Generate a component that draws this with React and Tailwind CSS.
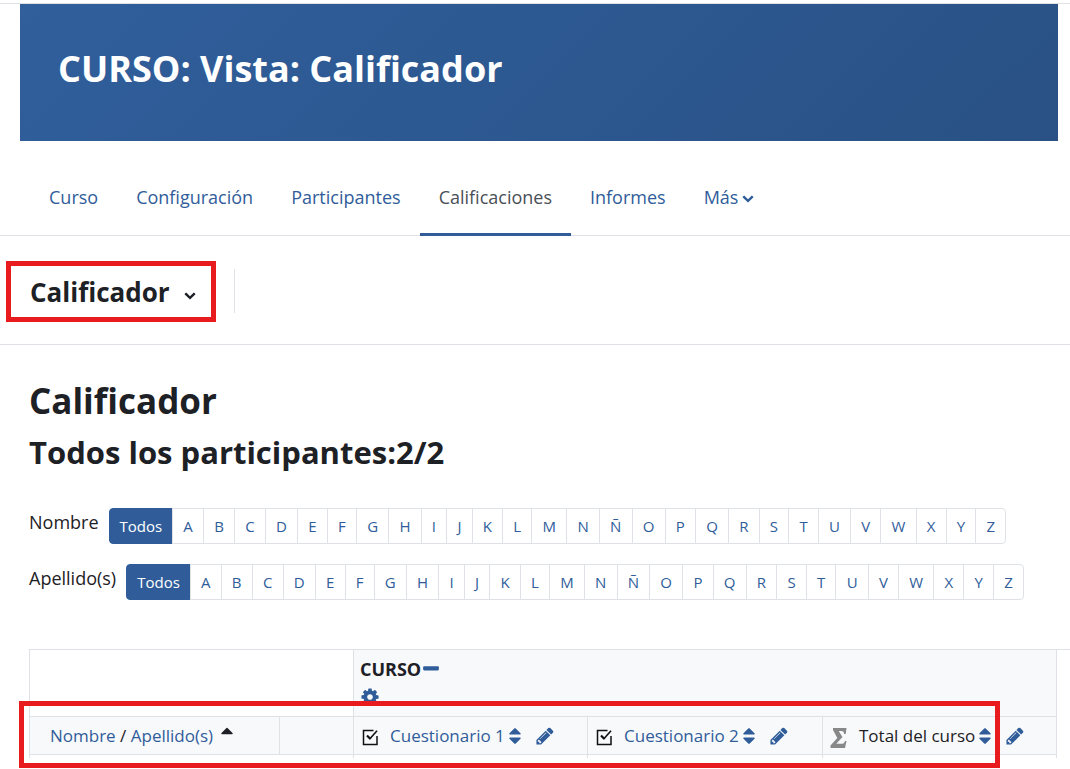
import { useState } from 'react';

const LETTERS = 'ABCDEFGHIJKLMNÑOPQRSTUVWXYZ'.split('');

const TABS = ['Curso', 'Configuración', 'Participantes', 'Calificaciones', 'Informes'];

const ICONS = {
  sort: 'M1408 1088q0 26-19 45l-448 448q-19 19-45 19t-45-19l-448-448q-19-19-19-45t19-45 45-19h896q26 0 45 19t19 45zm0-384q0 26-19 45t-45 19h-896q-26 0-45-19t-19-45 19-45l448-448q19-19 45-19t45 19l448 448q19 19 19 45z',
  pencil:
    'M491 1536l91-91-235-235-91 91v107h128v128h107zm523-928q0-22-22-22-10 0-17 7l-542 542q-7 7-7 17 0 22 22 22 10 0 17-7l542-542q7-7 7-17zm-54-192l416 416-832 832h-416v-416zm683 96q0 53-37 90l-166 166-416-416 166-165q36-38 90-38 53 0 91 38l235 234q37 39 37 91z',
  cog: 'M1152 896q0-106-75-181t-181-75-181 75-75 181 75 181 181 75 181-75 75-181zm512-109v222q0 12-8 23t-20 13l-185 28q-19 54-39 91 35 50 107 138 10 12 10 25t-9 23q-27 37-99 108t-94 71q-12 0-26-9l-138-108q-44 23-91 38-16 136-29 186-7 28-36 28h-222q-14 0-24.5-8.5t-11.5-21.5l-28-184q-49-16-90-37l-141 107q-10 9-25 9-14 0-25-11-126-114-165-168-7-10-7-23 0-12 8-23 15-21 51-66.5t54-70.5q-27-50-41-99l-183-27q-13-2-21-12.5t-8-23.5v-222q0-12 8-23t19-13l186-28q14-46 39-92-40-57-107-138-10-12-10-24 0-10 9-23 26-36 98.5-107.5t94.5-71.5q13 0 26 10l138 107q44-23 91-38 16-136 29-186 7-28 36-28h222q14 0 24.5 8.5t11.5 21.5l28 184q49 16 90 37l142-107q9-9 24-9 13 0 25 10 129 119 165 170 7 8 7 22 0 12-8 23-15 21-51 66.5t-54 70.5q26 50 41 98l183 28q13 2 21 12.5t8 23.5z',
  minus: 'M1600 736v192q0 40-28 68t-68 28h-1216q-40 0-68-28t-28-68v-192q0-40 28-68t68-28h1216q40 0 68 28t28 68z',
  caretUp: 'M1408 1216q0 26-19 45t-45 19h-896q-26 0-45-19t-19-45 19-45l448-448q19-19 45-19t45 19l448 448q19 19 19 45z',
  chevron:
    'M1683 808l-742 741q-19 19-45 19t-45-19l-742-741q-19-19-19-45.5t19-45.5l166-165q19-19 45-19t45 19l531 531 531-531q19-19 45-19t45 19l166 165q19 19 19 45.5t-19 45.5z',
};

function Icon({ name, className = 'size-5' }) {
  return (
    <svg className={`shrink-0 ${className}`} viewBox="0 0 1792 1792" fill="currentColor" aria-hidden="true">
      <path d={ICONS[name]} />
    </svg>
  );
}

function QuizIcon() {
  return (
    <svg className="size-5 shrink-0 text-[#111]" viewBox="0 0 20 20" fill="none" stroke="currentColor" aria-hidden="true">
      <path d="M13.500 4.500H3.500v14h13.500V10" strokeWidth="1.5" />
      <path d="M7 9.500l3.500 3.500" strokeWidth="2.2" />
      <path d="M9.700 13L17 4.700" strokeWidth="1.6" />
    </svg>
  );
}

function SigmaIcon() {
  return (
    <svg className="mt-1 size-5 shrink-0 text-[#888]" viewBox="0 0 20 20" fill="currentColor" aria-hidden="true">
      <path d="M4 0h13.500l-.8 6h-1.700c0-2.400-.9-3-3-3H9.700l3.800 6-6.200 6.800h5c2.200 0 3-.8 3.800-2.800h1.400L16 20H1.500v-2.500l6.800-7.500L4 2z" />
    </svg>
  );
}

function InitialsBar({ label }) {
  const [selected, setSelected] = useState('Todos');

  return (
    <div className="flex items-start gap-[10px]">
      <span className="text-[18px] leading-7">{label}</span>
      <nav aria-label={label} className="flex w-full max-w-[898px]">
        {['Todos', ...LETTERS].map((item) => (
          <button
            key={item}
            type="button"
            onClick={() => setSelected(item)}
            className={`-ml-px h-9 grow border px-[10px] text-[15px] first:ml-0 first:grow-0 first:rounded-l last:rounded-r ${
              selected === item ? 'border-[#305d9a] bg-[#305d9a] text-white' : 'border-[#dee2e6] text-[#305d9a]'
            }`}
          >
            {item}
          </button>
        ))}
      </nav>
    </div>
  );
}

function ItemHeader({ icon, title, link = true }) {
  return (
    <th scope="col" className="border border-[#dee2e6] bg-[#f8f9fb] py-0 pr-0 pl-[6px] font-normal">
      <div className="flex h-[37px] items-center">
        {icon}
        {link ? (
          <a href="#item" className="ml-[10px] text-[#305d9a]">{title}</a>
        ) : (
          <span className="ml-[10px]">{title}</span>
        )}
        <button type="button" aria-label={`Ordenar por ${title}`} className="text-[#305d9a]">
          <Icon name="sort" />
        </button>
        <button type="button" aria-label={`Editar ${title}`} className="ml-[10px] text-[#305d9a]">
          <Icon name="pencil" />
        </button>
      </div>
    </th>
  );
}

export default function App() {
  return (
    <div className="overflow-x-hidden bg-white pb-[11px] font-['Open_Sans',sans-serif] text-[#1d2125]">
      <div className="h-1 border-b border-[#dee2e6]" />
      <header className="mr-3 ml-5 h-[137px] bg-linear-135 from-[#305f9c] to-[#295185] px-[38px] pt-10">
        <h1 className="text-[36px] leading-[50px] font-bold text-white">CURSO: Vista: Calificador</h1>
      </header>

      <nav className="mt-[19px] flex border-b border-[#dee2e6] pl-[30px] text-[18px]">
        {TABS.map((tab) => (
          <a
            key={tab}
            href="#tab"
            className={`-mb-px flex h-[76px] items-center border-b-3 px-[19px] pt-[2px] ${
              tab === 'Calificaciones' ? 'border-b-[#305d9a] text-[#495057]' : 'border-b-transparent text-[#305d9a]'
            }`}
          >
            {tab}
          </a>
        ))}
        <button type="button" className="flex h-[75px] items-center gap-1 px-[19px] text-[#305d9a]">
          Más
          <Icon name="chevron" className="size-3" />
        </button>
      </nav>

      <div className="flex h-[109px] items-center border-b border-[#dee2e6] pt-[2px] pl-[6px]">
        <button
          type="button"
          className="flex h-[61px] w-[210px] items-center gap-[14px] border-5 border-[#e81b1e] pt-[2px] pl-[19px] text-[26px] font-bold"
        >
          Calificador
          <Icon name="chevron" className="mt-[6px] size-3" />
        </button>
        <div className="ml-[18px] h-11 border-l border-[#dee2e6]" />
      </div>

      <main className="pl-[29px]">
        <h2 className="pt-[31px] text-[35px] leading-[50px] font-bold">Calificador</h2>
        <h3 className="mt-[3px] text-[31px] leading-[46px] font-bold">Todos los participantes:2/2</h3>

        <div className="mt-[33px] flex flex-col gap-5">
          <InitialsBar label="Nombre" />
          <InitialsBar label="Apellido(s)" />
        </div>

        <div className="relative mt-[49px] text-[17px]">
          <table className="w-full table-fixed border-collapse text-left">
            <colgroup>
              <col className="w-[250px]" />
              <col className="w-[74px]" />
              <col className="w-[234px]" />
              <col className="w-[235px]" />
              <col className="w-[234px]" />
              <col />
            </colgroup>
            <thead>
              <tr>
                <td colSpan={2} className="border border-[#dee2e6]" />
                <th scope="colgroup" colSpan={3} className="border border-[#dee2e6] bg-[#f8f9fb] p-0 pl-[6px] align-top">
                  <div className="flex h-[66px] flex-col pt-[5px] text-[18px]">
                    <div className="flex h-7 items-center">
                      CURSO
                      <button type="button" aria-label="Contraer" className="text-[#305d9a]">
                        <Icon name="minus" />
                      </button>
                    </div>
                    <button type="button" aria-label="Configurar curso" className="flex h-7 items-center text-[#305d9a]">
                      <Icon name="cog" />
                    </button>
                  </div>
                </th>
                <td className="border-t border-[#dee2e6]" />
              </tr>
              <tr>
                <th scope="col" className="border border-[#dee2e6] bg-[#f8f9fb] py-0 pl-5 font-normal">
                  <div className="flex items-center">
                    <span>
                      <a href="#nombre" className="text-[#305d9a]">Nombre</a> /{' '}
                      <a href="#apellidos" className="text-[#305d9a]">Apellido(s)</a>
                    </span>
                    <Icon name="caretUp" className="mb-3 ml-1 size-5" />
                  </div>
                </th>
                <td className="border border-[#dee2e6] bg-[#f8f9fb]" />
                <ItemHeader icon={<QuizIcon />} title="Cuestionario 1" />
                <ItemHeader icon={<QuizIcon />} title="Cuestionario 2" />
                <ItemHeader icon={<SigmaIcon />} title="Total del curso" link={false} />
                <td />
              </tr>
            </thead>
            <tbody>
              <tr className="h-[3px]">
                <td colSpan={2} className="border-l border-[#dee2e6] p-0" />
                <td className="border-l border-[#dee2e6] p-0" />
                <td className="border-l border-[#dee2e6] p-0" />
                <td className="border-x border-[#dee2e6] p-0" />
                <td className="p-0" />
              </tr>
            </tbody>
          </table>
          {/* callout around the column headings */}
          <div className="pointer-events-none absolute top-[52px] -left-[10px] h-[67px] w-[981px] border-5 border-[#e81b1e]" />
        </div>
      </main>
    </div>
  );
}
